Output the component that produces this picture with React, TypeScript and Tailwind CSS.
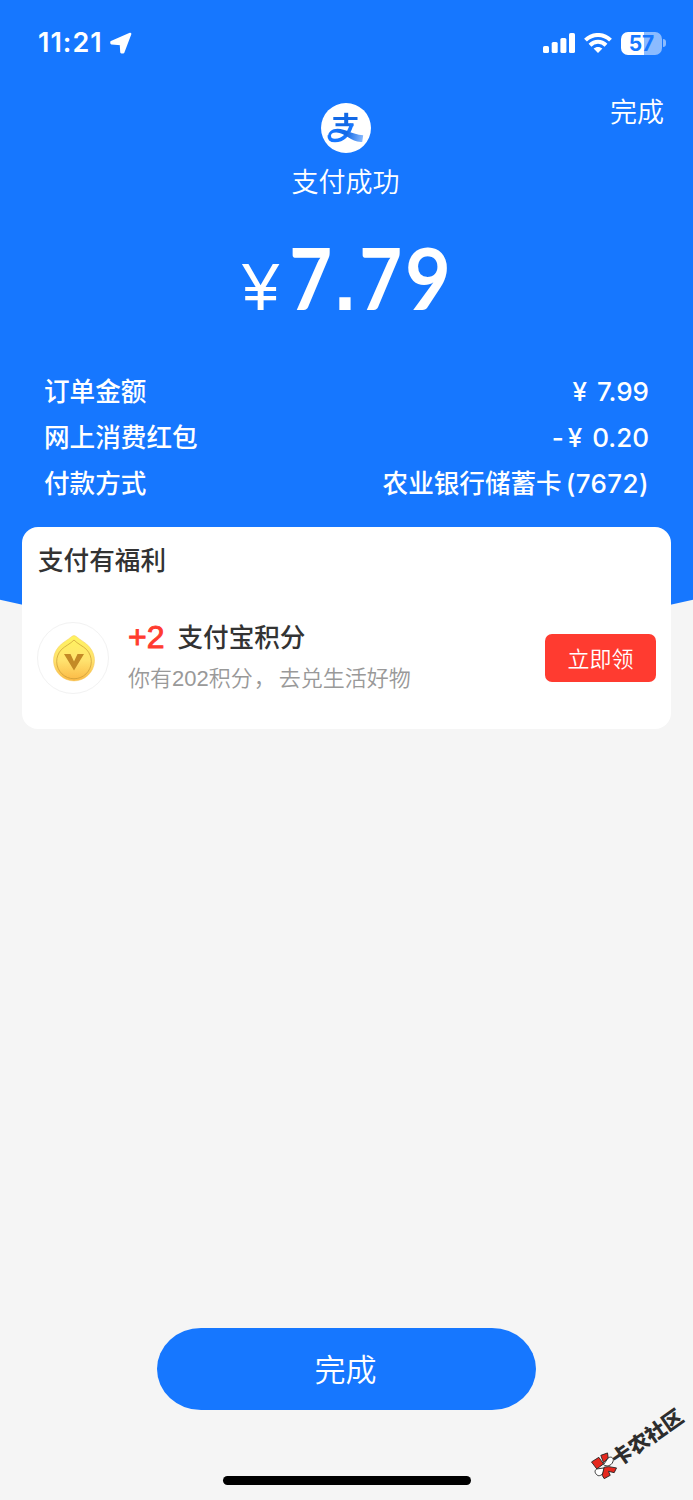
const orderRows = [
  { label: "订单金额", value: "7.99", minus: false },
  { label: "网上消费红包", value: "0.20", minus: true },
];

function StatusBar() {
  return (
    <div className="flex h-[86px] items-center justify-between pl-[38px] pr-[27px]">
      <div className="flex items-center gap-[7px]">
        <span className="w-[65px] whitespace-nowrap font-['Inter'] text-[27px] font-semibold leading-[34px] tracking-[1px]">11:21</span>
        <svg className="h-[22px] w-[22px]" viewBox="0 0 22 22" fill="currentColor" stroke="currentColor" strokeWidth="2.400" strokeLinejoin="round">
          <path d="M20.200 1.900L13.200 20.300L11.400 20.300L10.900 12L1.500 11.200L1.400 10z" />
        </svg>
      </div>
      <div className="flex items-center gap-[9px]">
        <svg className="h-5 w-8" viewBox="0 0 32 20" fill="currentColor">
          <rect x="0" y="13" width="6" height="7" rx="1.600" />
          <rect x="8.700" y="9" width="6" height="11" rx="1.600" />
          <rect x="17.400" y="5" width="6" height="15" rx="1.600" />
          <rect x="26" y="0" width="6" height="20" rx="1.600" />
        </svg>
        <svg className="h-5 w-7" viewBox="0 0 28 20" fill="none" stroke="currentColor" strokeWidth="4">
          <path d="M1.500 7.200C8.500.2 19.500.2 26.500 7.200" />
          <path d="M6 12.200c4.600-4.500 11.400-4.500 16 0" />
          <path d="M14 20l-4.400-4.400c2.500-2.200 6.300-2.200 8.800 0z" fill="currentColor" stroke="none" />
        </svg>
        <div className="flex items-center gap-[1px]">
          <div className="flex h-[23px] w-[41px] items-center justify-center rounded-[7px] bg-linear-to-r from-white from-57% to-[#8bbbff] to-57% font-['Inter'] text-[21px] font-bold leading-none text-[#1677ff]">57</div>
          <div className="h-2 w-[3px] rounded-r-full bg-[#8bbbff]" />
        </div>
      </div>
    </div>
  );
}

function AlipayLogo() {
  return (
    <svg className="h-[50px] w-[50px]" viewBox="0 0 50 50" fill="none">
      <defs>
        <linearGradient id="tail" x1="8" y1="30" x2="42" y2="38" gradientUnits="userSpaceOnUse">
          <stop offset="0" stopColor="#1677ff" />
          <stop offset=".5" stopColor="#1269e6" />
          <stop offset="1" stopColor="#8dbcff" />
        </linearGradient>
      </defs>
      <circle cx="25" cy="25" r="25" fill="#fff" />
      <path d="M12.300 15.500H36.500M14.500 21.700H32.500" stroke="#1269e6" strokeWidth="2.900" />
      <path d="M25.200 9.800V22" stroke="#1269e6" strokeWidth="4" />
      <path d="M30.800 21C28.500 29 23.500 37.500 14 37.500C9.500 37.500 8 35.500 8.300 32.500" stroke="#1677ff" strokeWidth="3.600" />
      <path d="M7.100 34C6.800 29 11 25.800 16.500 25.800C25 25.800 30 31.500 42.200 32.200L41.200 39C31 40 24 29.800 15.500 29.600C11.500 29.500 9.700 31 9.700 34Z" fill="url(#tail)" />
    </svg>
  );
}

function PointsCoin() {
  return (
    <div className="flex h-[72px] w-[72px] items-center justify-center rounded-full border border-[#f2f2f2] pt-[1px] pl-[1px]">
      <svg className="h-[47px] w-[42px]" viewBox="0 0 42 47">
        <defs>
          <linearGradient id="coin" x1="0" y1="0" x2="0" y2="1">
            <stop offset="0" stopColor="#fff45e" />
            <stop offset=".55" stopColor="#ffe26e" />
            <stop offset="1" stopColor="#fbb844" />
          </linearGradient>
        </defs>
        <path d="M18.800 1.400Q21-.3 23.200 1.400C27 5 33 7.500 36.500 12A20.500 20.500 0 1 1 5.500 12C9 7.500 15 5 18.800 1.400Z" fill="url(#coin)" stroke="#f3c85a" strokeWidth=".5" />
        <path d="M21 5C24.500 8.800 30 11 33.500 14.500A17.300 17.300 0 1 1 8.500 14.500C12 11 17.500 8.800 21 5Z" fill="none" stroke="#c99a35" strokeWidth=".7" />
        <path d="M11 19h6.500l3.500 7.500 3.500-7.500H31L21 35.500z" fill="#c48a26" />
      </svg>
    </div>
  );
}

function Watermark() {
  return (
    <div className="absolute right-[6px] bottom-[42px] flex w-[106px] -rotate-35 items-center text-[#2d2d2d]">
      <svg className="mr-[-3px] ml-[4px] h-[26px] w-[26px] shrink-0 rotate-35 overflow-visible" viewBox="0 0 26 26" stroke="#222" strokeWidth=".9" strokeLinejoin="round">
        <path d="M0 9.300L7.300 4.700L12 11.300L5.300 16.300Z" fill="#e5281e" />
        <path d="M9.300 2.700L16 .3L16.700 5.300L12 10Z" fill="#e5281e" />
        <path d="M16.700 5.300C20 3 23 6 21.300 9.300C20 13 15 14.500 12 12Z" fill="#fff" />
        <path d="M5.300 16.300C2 18 4 22 6.700 23C10 23.500 13 20 12.700 15.300Z" fill="#fff" />
        <path d="M12.700 14.500L17.300 14L25 15.300L22.700 20L17 18.700L18.700 22.700L12.700 26L10.700 22.700Z" fill="#e5281e" />
      </svg>
      <span className="whitespace-nowrap text-[20.500px] font-black leading-6">卡农社区</span>
    </div>
  );
}

export default function App() {
  return (
    <div className="relative flex h-[1500px] w-[693px] flex-col overflow-hidden bg-[#f5f5f5] font-['Noto_Sans_CJK_SC',sans-serif] font-[350] text-white">
      <div className="absolute inset-x-0 top-0 h-[640px] bg-[#1677ff] [clip-path:circle(1545px_at_50%_-906px)]" />

      <div className="relative flex flex-1 flex-col">
        <StatusBar />

        <header className="grid grid-cols-3 pt-[17px]">
          <div className="col-start-2 flex flex-col items-center pr-[2px]">
            <AlipayLogo />
            <h1 className="mt-2 text-[27px] leading-10">支付成功</h1>
          </div>
          <button className="-mt-3 mr-[29px] self-start justify-self-end text-[27px] leading-10">完成</button>
        </header>

        <div className="mt-[26px] flex h-[100px] items-baseline pl-[242px] leading-[100px]">
          <span className="w-[44px] font-['Liberation_Sans'] text-[67px] font-normal">¥</span>
          <div className="flex items-baseline text-center text-[86px]">
            <span className="w-[47px] scale-x-86 font-['Lato'] font-bold">7</span>
            <span className="w-[23px] scale-x-92 font-['Liberation_Sans'] font-bold">.</span>
            <span className="w-[47px] scale-x-86 font-['Lato'] font-bold">7</span>
            <span className="w-[48px] scale-x-92 font-['Lato'] font-bold">9</span>
          </div>
        </div>

        <dl className="mt-10 flex flex-col pr-11 pl-[44px] text-[25.600px] font-medium leading-[46px]">
          {orderRows.map((row) => (
            <div key={row.label} className="flex h-[46px] justify-between">
              <dt>{row.label}</dt>
              <dd className="flex pt-[2px] font-['Inter'] text-[26px]">
                {row.minus && <span className="mr-[4px]">-</span>}
                <span className="mr-[10px]">¥</span>
                <span>{row.value}</span>
              </dd>
            </div>
          ))}
          <div className="flex h-[46px] justify-between">
            <dt>付款方式</dt>
            <dd className="flex gap-1">
              <span>农业银行储蓄卡</span>
              <span className="pt-[2px] font-['Inter'] text-[26px] tracking-[0.4px]">(7672)</span>
            </dd>
          </div>
        </dl>

        <section className="mx-[22px] mt-[22px] h-[202px] rounded-2xl bg-white px-[15px] pt-3 text-[#333]">
          <h2 className="pl-[1px] text-[25.600px] font-medium leading-10">支付有福利</h2>
          <div className="mt-[37px] flex items-center">
            <PointsCoin />
            <div className="ml-[19px] flex-1">
              <div className="flex items-center text-[25.600px] font-medium leading-10">
                <span className="mr-[13px] pt-[2px] font-['Liberation_Sans'] text-[32px] leading-[38px] font-normal text-[#ff3b30] [-webkit-text-stroke:0.9px_#ff3b30]">+2</span>
                支付宝积分
              </div>
              <p className="text-[22px] leading-10 text-[#999]">
                你有<span className="font-['Liberation_Sans']">202</span>积分<span className="mr-[3px] ml-[1px]">，</span>去兑生活好物
              </p>
            </div>
            <button className="h-12 w-[111px] rounded-[7px] bg-[#ff3b30] pb-[1px] text-[22px] text-white">立即领</button>
          </div>
        </section>

        <button className="mx-auto mt-auto mb-[90px] h-[82px] w-[379px] rounded-[44px/41px] bg-[#1677ff] pr-[2px] pb-[2px] text-[31px]">完成</button>
      </div>

      <div className="absolute bottom-[15px] left-[223px] h-[9px] w-[248px] rounded-full bg-black" />
      <Watermark />
    </div>
  );
}
